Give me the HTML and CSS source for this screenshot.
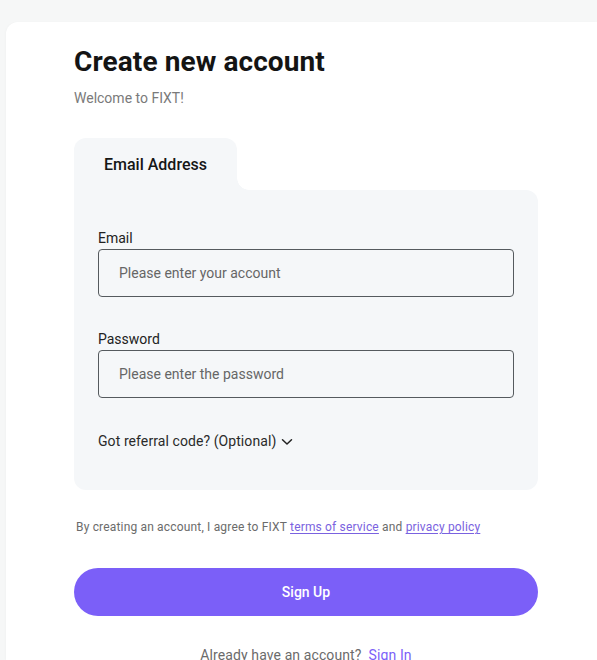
FILE: index.html
```html
<!DOCTYPE html>
<html lang="en">
<head>
<meta charset="utf-8">
<title>Create new account</title>
<link rel="stylesheet" href="styles.css">
</head>
<body>
<div class="page">
  <main class="card">
    <div class="content">
      <h1 class="title">Create new account</h1>
      <p class="subtitle">Welcome to FIXT!</p>

      <div class="tabs">
        <div class="tab">Email Address</div>
      </div>
      <form class="panel">
        <div class="field">
          <label class="label" for="email">Email</label>
          <input class="input" id="email" type="text" placeholder="Please enter your account">
        </div>
        <div class="field">
          <label class="label" for="pw">Password</label>
          <input class="input" id="pw" type="password" placeholder="Please enter the password">
        </div>
        <div class="referral">
          <span>Got referral code? (Optional)</span>
          <svg class="chev" width="12" height="8" viewBox="0 0 12 8"><path d="M1.5 1.8 L6 6 L10.5 1.8" fill="none" stroke="#222" stroke-width="1.5" stroke-linecap="round" stroke-linejoin="round"/></svg>
        </div>
      </form>

      <p class="terms">By creating an account, I agree to FIXT <a class="link" href="#">terms of service</a> and <a class="link" href="#">privacy policy</a></p>

      <button class="btn" type="button">Sign Up</button>

      <p class="signin">Already have an account?&nbsp; <a class="signin-link" href="#">Sign In</a></p>
    </div>
  </main>
</div>
</body>
</html>
```

FILE: styles.css
```css
* { box-sizing: border-box; }
html, body { margin: 0; padding: 0; }
body {
  background: #f6f7f7;
  font-family: Roboto, "Liberation Sans", Arial, sans-serif;
  color: #1a1a1a;
  overflow: hidden;
}
.page {
  padding: 22px 0 0 6px;
  height: 660px;
}
.card {
  background: #ffffff;
  border-top-left-radius: 12px;
  height: 100%;
  box-shadow: -1px 0 2px rgba(0,0,0,0.02);
}
.content {
  width: 464px;
  margin-left: 68px;
  padding-top: 24px;
}
.title {
  margin: 0;
  font-size: 28px;
  line-height: 32px;
  font-weight: 700;
  color: #141414;
  letter-spacing: 0.1px;
}
.subtitle {
  margin: 10px 0 0;
  font-size: 14px;
  line-height: 20px;
  color: #7a7a7a;
}
.tabs {
  margin-top: 30px;
  display: flex;
}
.tab {
  position: relative;
  background: #f5f7f9;
  border-radius: 12px 12px 0 0;
  height: 52px;
  padding: 0 30px;
  display: flex;
  align-items: center;
  font-size: 16px;
  font-weight: 500;
  color: #161616;
}
.tab::after {
  content: "";
  position: absolute;
  left: 100%;
  bottom: 0;
  width: 12px;
  height: 12px;
  background: radial-gradient(circle at 100% 0, transparent 11.5px, #f5f7f9 12px);
}
.panel {
  background: #f5f7f9;
  border-radius: 0 12px 12px 12px;
  padding: 38px 24px 39px;
  display: flex;
  flex-direction: column;
  gap: 32px;
}
.field {
  display: flex;
  flex-direction: column;
}
.label {
  font-size: 14px;
  line-height: 20px;
  color: #222;
  margin-bottom: 1px;
}
.input {
  height: 48px;
  width: 100%;
  border: 1px solid #555a5e;
  border-radius: 4px;
  background: #f5f7f9;
  padding: 0 20px 1px;
  font-family: inherit;
  font-size: 14px;
  color: #222;
  outline: none;
}
.input::placeholder { color: #666; }
.referral {
  display: flex;
  align-items: center;
  gap: 5px;
  font-size: 14px;
  line-height: 20px;
  letter-spacing: 0.08px;
  color: #2a2a2a;
  margin-top: 1px;
}
.chev { display: block; margin-top: 1px; }
.terms {
  margin: 28px 0 0 2px;
  font-size: 12px;
  line-height: 18px;
  letter-spacing: 0.17px;
  color: #6b6b6b;
}
.link {
  color: #7a62e0;
  text-decoration: underline;
  text-underline-offset: 2px;
}
.btn {
  display: block;
  margin-top: 32px;
  width: 100%;
  height: 48px;
  border: none;
  border-radius: 24px;
  background: #7b5ff8;
  color: #ffffff;
  font-family: inherit;
  font-size: 14px;
  font-weight: 500;
}
.signin {
  margin: 29px 0 0;
  text-align: center;
  font-size: 14px;
  line-height: 20px;
  letter-spacing: 0.1px;
  color: #6b6b6b;
}
.signin-link {
  color: #7b5ff8;
  text-decoration: none;
}
```
